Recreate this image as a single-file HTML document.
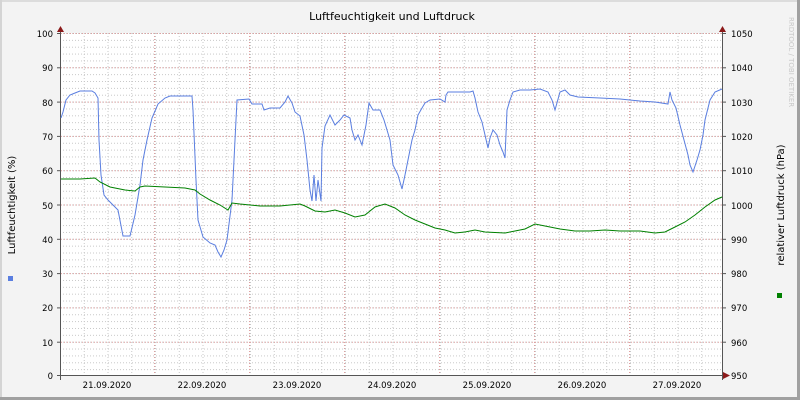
<!DOCTYPE html>
<html><head><meta charset="utf-8"><style>
html,body{margin:0;padding:0;}
body{width:800px;height:400px;overflow:hidden;background:#f3f3f3;}
svg{display:block;}
text{font-family:"DejaVu Sans","Liberation Sans",sans-serif;fill:#000;}
</style></head><body>
<svg width="800" height="400" viewBox="0 0 800 400" xmlns="http://www.w3.org/2000/svg">
<defs>
<pattern id="hmin" x="0" y="33" width="800" height="6.86" patternUnits="userSpaceOnUse">
<line x1="0" y1="0.5" x2="800" y2="0.5" stroke="#c8c8c8" stroke-width="1" stroke-dasharray="1,2"/>
</pattern>
<pattern id="vmin" x="60" y="0" width="23.75" height="400" patternUnits="userSpaceOnUse">
<line x1="0.5" y1="0" x2="0.5" y2="400" stroke="#c8c8c8" stroke-width="1" stroke-dasharray="1,2"/>
</pattern>
</defs>
<rect x="0" y="0" width="800" height="400" fill="#f3f3f3"/>
<rect x="0" y="0" width="800" height="2" fill="#dcdcdc"/>
<rect x="0" y="0" width="2" height="400" fill="#d4d4d4"/>
<rect x="797" y="0" width="3" height="400" fill="#a0a0a0"/>
<rect x="0" y="397" width="800" height="3" fill="#a0a0a0"/>
<rect x="61" y="33" width="662" height="343" fill="#fff"/>
<rect x="61" y="33" width="662" height="343" fill="url(#hmin)"/>
<rect x="61" y="33" width="662" height="343" fill="url(#vmin)"/>
<g stroke="#e0a0a0" stroke-width="1" stroke-dasharray="1,2">
<line x1="61" y1="33.5" x2="723" y2="33.5"/>
<line x1="61" y1="67.8" x2="723" y2="67.8"/>
<line x1="61" y1="102.1" x2="723" y2="102.1"/>
<line x1="61" y1="136.4" x2="723" y2="136.4"/>
<line x1="61" y1="170.7" x2="723" y2="170.7"/>
<line x1="61" y1="205" x2="723" y2="205"/>
<line x1="61" y1="239.3" x2="723" y2="239.3"/>
<line x1="61" y1="273.6" x2="723" y2="273.6"/>
<line x1="61" y1="307.9" x2="723" y2="307.9"/>
<line x1="61" y1="342.2" x2="723" y2="342.2"/>
<line x1="154.5" y1="33" x2="154.5" y2="376"/>
<line x1="249.5" y1="33" x2="249.5" y2="376"/>
<line x1="344.5" y1="33" x2="344.5" y2="376"/>
<line x1="439.5" y1="33" x2="439.5" y2="376"/>
<line x1="534.5" y1="33" x2="534.5" y2="376"/>
<line x1="629.5" y1="33" x2="629.5" y2="376"/>
</g>
<g stroke="#555" stroke-width="1">
<line x1="60.5" y1="30" x2="60.5" y2="380"/>
<line x1="722.5" y1="30" x2="722.5" y2="380"/>
<line x1="57" y1="375.5" x2="726" y2="375.5"/>
</g>
<g stroke="#555" stroke-width="1">
<line x1="57" y1="33.5" x2="60" y2="33.5"/><line x1="57" y1="67.8" x2="60" y2="67.8"/><line x1="57" y1="102.1" x2="60" y2="102.1"/><line x1="57" y1="136.4" x2="60" y2="136.4"/><line x1="57" y1="170.7" x2="60" y2="170.7"/><line x1="57" y1="205" x2="60" y2="205"/><line x1="57" y1="239.3" x2="60" y2="239.3"/><line x1="57" y1="273.6" x2="60" y2="273.6"/><line x1="57" y1="307.9" x2="60" y2="307.9"/><line x1="57" y1="342.2" x2="60" y2="342.2"/>
<line x1="723" y1="33.5" x2="726" y2="33.5"/><line x1="723" y1="67.8" x2="726" y2="67.8"/><line x1="723" y1="102.1" x2="726" y2="102.1"/><line x1="723" y1="136.4" x2="726" y2="136.4"/><line x1="723" y1="170.7" x2="726" y2="170.7"/><line x1="723" y1="205" x2="726" y2="205"/><line x1="723" y1="239.3" x2="726" y2="239.3"/><line x1="723" y1="273.6" x2="726" y2="273.6"/><line x1="723" y1="307.9" x2="726" y2="307.9"/><line x1="723" y1="342.2" x2="726" y2="342.2"/>
</g>
<polygon points="57,32 64,32 60.5,26" fill="#8b1a1a"/>
<polygon points="719,32 726,32 722.5,26" fill="#8b1a1a"/>
<polygon points="723,372 723,379 730,375.5" fill="#8b1a1a"/>
<polyline fill="none" stroke="#5a7ee0" stroke-width="1" points="61,118 63,112 66,100 70,95 75,93 80,91 92,91 95,93 98,98 99,140 101,175 104,195 108,200 113,205 118,210 123,236 130,236 135,215 140,185 143,160 147,140 152,118 158,104 165,98 170,96 192,96 193,110 196,180 198,220 203,237 210,243 215,245 218,252 221,257 224,250 227,240 232,200 235,140 237,100 249,99 252,104 262,104 264,110 270,108 280,108 285,102 288,96 292,103 295,112 300,116 304,135 307,160 310,190 312,201 314,175 316,201 318,180 321,201 322,148 325,126 330,115 335,125 340,120 344,115 350,118 352,130 355,140 358,135 362,145 366,125 369,103 373,110 380,110 384,120 387,130 390,140 393,165 398,175 402,189 405,175 408,160 412,140 415,130 418,115 422,108 425,103 430,100 440,99 445,102 446,95 448,92 470,92 473,91 475,98 478,112 482,122 485,135 488,148 490,138 493,130 497,135 500,145 503,152 505,158 507,110 510,100 513,92 520,90 530,90 540,89 548,92 552,100 555,110 560,92 565,90 570,95 578,97 600,98 620,99 640,101 655,102 668,104 670,92 672,100 676,108 680,125 684,140 688,155 690,165 693,172 697,160 700,150 703,135 705,120 710,100 715,92 722,89"/>
<polyline fill="none" stroke="#008000" stroke-width="1" points="61,179 80,179 95,178 100,182 110,187 125,190 135,191 140,187 145,186 165,187 185,188 195,190 200,194 210,200 220,205 228,210 232,203 240,204 260,206 280,206 300,204 305,206 315,211 325,212 335,210 345,213 355,217 365,215 375,207 385,204 395,208 405,215 415,220 425,224 435,228 445,230 455,233 465,232 475,230 485,232 505,233 515,231 525,229 535,224 545,226 560,229 575,231 590,231 605,230 620,231 640,231 655,233 665,232 675,227 685,222 695,215 705,207 715,200 722,197"/>
<text x="392" y="20" font-size="11" text-anchor="middle">Luftfeuchtigkeit und Luftdruck</text>
<g font-size="8.5" text-anchor="end">
<text x="53" y="37">100</text><text x="53" y="71">90</text><text x="53" y="106">80</text><text x="53" y="140">70</text><text x="53" y="174">60</text><text x="53" y="209">50</text><text x="53" y="243">40</text><text x="53" y="277">30</text><text x="53" y="311">20</text><text x="53" y="346">10</text><text x="53" y="379">0</text>
</g>
<g font-size="8.5">
<text x="731" y="37">1050</text><text x="731" y="71">1040</text><text x="731" y="106">1030</text><text x="731" y="140">1020</text><text x="731" y="174">1010</text><text x="731" y="209">1000</text><text x="731" y="243">990</text><text x="731" y="277">980</text><text x="731" y="311">970</text><text x="731" y="346">960</text><text x="731" y="379">950</text>
</g>
<g font-size="8.5" text-anchor="middle">
<text x="107" y="388">21.09.2020</text><text x="202" y="388">22.09.2020</text><text x="297" y="388">23.09.2020</text><text x="392" y="388">24.09.2020</text><text x="487" y="388">25.09.2020</text><text x="582" y="388">26.09.2020</text><text x="677" y="388">27.09.2020</text>
</g>
<text transform="translate(15,205) rotate(-90)" font-size="10" text-anchor="middle">Luftfeuchtigkeit (%)</text>
<text transform="translate(784,205) rotate(-90)" font-size="10" text-anchor="middle">relativer Luftdruck (hPa)</text>
<rect x="8" y="276" width="5" height="5" fill="#5a7ee0"/>
<rect x="777" y="293" width="5" height="5" fill="#008000"/>
<text transform="translate(789,17) rotate(90)" font-size="7" style="fill:#c8c8c8">RRDTOOL / TOBI OETIKER</text>
</svg>
</body></html>
